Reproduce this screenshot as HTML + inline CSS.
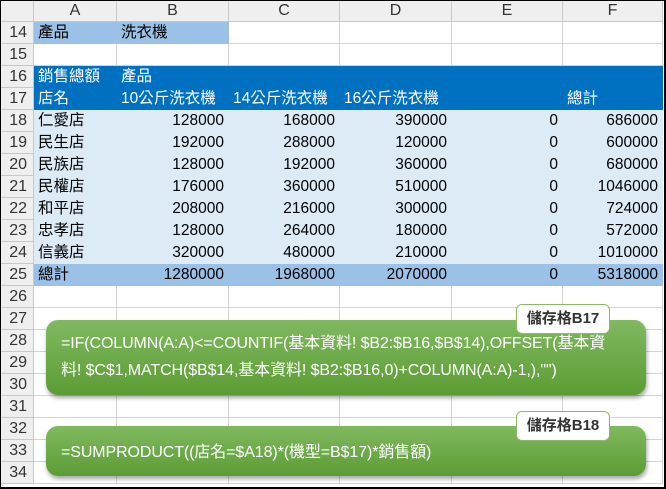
<!DOCTYPE html>
<html><head><meta charset="utf-8"><style>
*{margin:0;padding:0;box-sizing:border-box}
body{width:666px;height:489px;overflow:hidden;background:#fff;font-family:"Liberation Sans","Noto Sans CJK TC",sans-serif;position:relative}
.c{position:absolute;height:22px;line-height:22px;font-size:15.5px;color:#000;white-space:nowrap;overflow:hidden;border-right:1px solid #d4d4d4;border-bottom:1px solid #d4d4d4;padding:0 4px}
.r{text-align:right}
.h{background:#efefef;text-align:center;color:#333;border-color:#c8c8c8;font-size:16px}
.b{background:#0070c0;color:#fff;border-color:#0070c0}
.l{background:#ddebf7;border-color:#ddebf7}
.m{background:#9bc2e6;border-color:#9bc2e6}
.call{position:absolute;left:46px;border-radius:12px;background:linear-gradient(#80b960,#5c9c34);box-shadow:1px 3px 4px rgba(0,0,0,.35);color:#fff;font-size:16px;padding-left:15px;letter-spacing:-0.1px}
.tab{position:absolute;left:516px;width:94px;height:30px;background:#fff;border:1px solid #8cb86c;border-radius:6px;text-align:center;line-height:28px;font-size:15px;color:#333;font-weight:bold}
</style></head><body>
<div id="g"></div>
<div class="call" style="top:320px;width:600px;height:75px;padding-top:10px;line-height:27px">=IF(COLUMN(A:A)&lt;=COUNTIF(基本資料! $B2:$B16,$B$14),OFFSET(基本資<br>料! $C$1,MATCH($B$14,基本資料! $B2:$B16,0)+COLUMN(A:A)-1,),"")</div>
<div class="tab" style="top:304px">儲存格B17</div>
<div class="call" style="top:426px;width:600px;height:50px;line-height:54px">=SUMPRODUCT((店名=$A18)*(機型=B$17)*銷售額)</div>
<div class="tab" style="top:411px">儲存格B18</div>
<div style="position:absolute;left:0;top:0;width:666px;height:489px;border:1px solid #000;border-right-width:2px;border-bottom-width:2px;pointer-events:none"></div>
<script>
var X=[0,34,117,229,340,452,563,663];
var rows=[
["產品","洗衣機","","","","",""],
["","","","","","",""],
["銷售總額","產品","","","","",""],
["店名","10公斤洗衣機","14公斤洗衣機","16公斤洗衣機","","總計"],
["仁愛店","128000","168000","390000","0","686000"],
["民生店","192000","288000","120000","0","600000"],
["民族店","128000","192000","360000","0","680000"],
["民權店","176000","360000","510000","0","1046000"],
["和平店","208000","216000","300000","0","724000"],
["忠孝店","128000","264000","180000","0","572000"],
["信義店","320000","480000","210000","0","1010000"],
["總計","1280000","1968000","2070000","0","5318000"]];
var h='',L="ABCDEF";
h+='<div class="c h" style="left:0;top:0;width:34px"></div>';
for(var j=0;j<6;j++)h+='<div class="c h" style="left:'+X[j+1]+'px;top:0;width:'+(X[j+2]-X[j+1])+'px">'+L[j]+'</div>';
for(var i=0;i<21;i++){var y=22+i*22,n=14+i;
h+='<div class="c h" style="left:0;top:'+y+'px;width:34px;text-align:right;padding-right:6px">'+n+'</div>';
for(var j=0;j<6;j++){var cls='',t='',w=X[j+2]-X[j+1];
if(i<12){var rr=rows[i];t=rr[j]||'';
if(i==0&&j<2)cls='m';else if(i==2||i==3)cls='b';else if(i>=4&&i<11)cls='l';else if(i==11)cls='m';
if(i>=4&&j>0)cls+=' r';}
var st='left:'+X[j+1]+'px;top:'+y+'px;width:'+w+'px;';
h+='<div class="c '+cls+'" style="'+st+'">'+t+'</div>';}}
document.getElementById('g').innerHTML=h;
</script>
</body></html>
